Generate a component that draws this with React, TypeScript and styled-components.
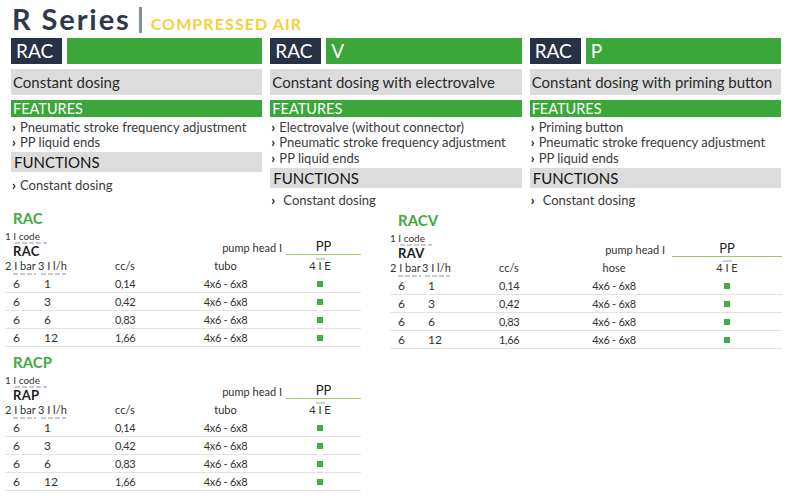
import styled, { createGlobalStyle } from "styled-components";

const GlobalStyle = createGlobalStyle`
  * { box-sizing: border-box; }
  body {
    margin: 0;
    background: #fff;
    font-family: Lato, "Open Sans", sans-serif;
    color: #333;
  }
`;

const NAVY = "#293244";
const GREEN = "#3ba63a";
const GRAY = "#dcdcdc";

const Page = styled.div`
  width: 791px;
  height: 500px;
  overflow: hidden;
  padding: 0 10px 0 11px;
`;

const Header = styled.header`
  display: flex;
  align-items: baseline;
  height: 38px;
  padding: 2px 0 0 1px;
`;

const Title = styled.h1`
  margin: 0;
  font-size: 29px;
  line-height: 34px;
  font-weight: 700;
  letter-spacing: 1.9px;
  color: #2c3a4b;
`;

const Divider = styled.span`
  align-self: flex-start;
  width: 3px;
  height: 26px;
  margin: 5px 9px 0 8px;
  background: #8090a0;
`;

const Subtitle = styled.span`
  font-size: 16px;
  font-weight: 700;
  color: #f4d03f;
  letter-spacing: 1.1px;
`;

const Columns = styled.section`
  display: grid;
  grid-template-columns: repeat(3, 1fr);
  column-gap: 8px;
`;

const Column = styled.div`
  display: flex;
  flex-direction: column;
`;

const ModelBar = styled.div`
  display: flex;
  gap: 5px;
  height: 26px;
`;

const ModelCode = styled.div`
  width: 51px;
  background: ${NAVY};
  color: #fff;
  font-size: 19px;
  line-height: 26px;
  padding-left: 5px;
`;

const ModelSuffix = styled(ModelCode)`
  flex: 1;
  width: auto;
  background: ${GREEN};
`;

const Description = styled.div`
  margin-top: 5px;
  height: 26px;
  line-height: 26px;
  background: ${GRAY};
  font-size: 15px;
  color: #2a2a2a;
  padding-left: 2px;
  white-space: nowrap;
`;

const SectionBar = styled.div<{ $tone: "green" | "gray" }>`
  margin-top: ${(p) => (p.$tone === "green" ? 5 : 2)}px;
  height: ${(p) => (p.$tone === "green" ? 17 : 20)}px;
  line-height: ${(p) => (p.$tone === "green" ? 17 : 20)}px;
  background: ${(p) => (p.$tone === "green" ? GREEN : GRAY)};
  color: ${(p) => (p.$tone === "green" ? "#fff" : "#151515")};
  font-size: ${(p) => (p.$tone === "green" ? 14.5 : 15)}px;
  padding-left: ${(p) => (p.$tone === "green" ? 2 : 3)}px;
  text-transform: uppercase;
`;

const List = styled.ul<{ $gap?: number }>`
  list-style: none;
  margin: ${(p) => p.$gap ?? 2}px 0 0;
  padding: 0;
`;

const Item = styled.li`
  display: flex;
  align-items: center;
  height: 15.5px;
  font-size: 13px;
  color: #3a3a3a;
  white-space: nowrap;
`;

const Chevron = styled.span<{ $indent?: number }>`
  width: ${(p) => p.$indent ?? 9}px;
  padding-left: 1px;
  font-weight: 900;
  font-size: 13px;
  color: #1e1e1e;
`;

const Tables = styled.section`
  display: grid;
  grid-template-columns: 356px 392px;
  column-gap: 29px;
  margin: 1px 0 0 -6px;
`;

const TableStack = styled.div<{ $offset?: number }>`
  display: flex;
  flex-direction: column;
  gap: 6px;
  margin-top: ${(p) => p.$offset ?? 0}px;
`;

const TableTitle = styled.h2`
  margin: 0;
  padding-left: 8px;
  font-size: 15px;
  line-height: 18px;
  font-weight: 700;
  color: #43a843;
`;

const Grid = styled.div<{ $cols: string }>`
  display: grid;
  grid-template-columns: ${(p) => p.$cols};
  font-size: 11px;
  letter-spacing: -0.3px;
  color: #333;
`;

const CodeBlock = styled.div`
  grid-column: 1 / 4;
  padding-top: 3px;
`;

const SmallLabel = styled.div`
  font-size: 10px;
  line-height: 12px;
  letter-spacing: 0;
  color: #333;
`;

const Dashes = styled.div<{ $left: number; $width: number }>`
  margin-left: ${(p) => p.$left}px;
  width: ${(p) => p.$width}px;
  height: 2px;
  background: repeating-linear-gradient(90deg, #c9c9c9 0 5px, transparent 5px 7px);
`;

const CodeName = styled.div`
  margin-top: 1px;
  padding-left: 8px;
  font-size: 13px;
  line-height: 13px;
  font-weight: 700;
  letter-spacing: 0.3px;
  color: #1d1d1d;
`;

const PumpLabel = styled.div<{ $shift: number }>`
  grid-column: 4;
  align-self: end;
  justify-self: end;
  margin: 0 ${(p) => p.$shift}px 3px 0;
  font-size: 11px;
  line-height: 14px;
  letter-spacing: 0;
  white-space: nowrap;
`;

const PumpValue = styled.div<{ $inset: number }>`
  grid-column: 5;
  align-self: end;
  margin: 0 0 3px ${(p) => p.$inset}px;
  border-bottom: 1px solid #9cc76a;
  font-size: 13px;
  line-height: 15px;
  letter-spacing: 0;
  text-align: center;
  color: #222;
`;

const HeadCell = styled.div<{ $center?: boolean }>`
  padding-top: 2px;
  font-size: 11px;
  line-height: 12px;
  letter-spacing: 0;
  text-align: ${(p) => (p.$center ? "center" : "left")};
  white-space: nowrap;
  ${Dashes} { margin-top: 1px; }
`;

const TopDash = styled.div`
  width: 9px;
  height: 2px;
  margin: -2px auto 0;
  background: #cfcfcf;
`;

const Cell = styled.div<{ $pad?: number; $center?: boolean }>`
  height: 18px;
  line-height: 17px;
  border-bottom: 1px solid #e3e3e3;
  padding-left: ${(p) => p.$pad ?? 0}px;
  text-align: ${(p) => (p.$center ? "center" : "left")};
`;

const BigCell = styled(Cell)`
  font-size: 12px;
  letter-spacing: 0;
`;

const Dot = styled.span`
  display: inline-block;
  width: 6px;
  height: 6px;
  background: #3fae49;
  vertical-align: 1px;
`;

type Model = {
  suffix: string;
  description: string;
  features: string[];
};

const models: Model[] = [
  {
    suffix: "",
    description: "Constant dosing",
    features: ["Pneumatic stroke frequency adjustment", "PP liquid ends"],
  },
  {
    suffix: "V",
    description: "Constant dosing with electrovalve",
    features: [
      "Electrovalve (without connector)",
      "Pneumatic stroke frequency adjustment",
      "PP liquid ends",
    ],
  },
  {
    suffix: "P",
    description: "Constant dosing with priming button",
    features: ["Priming button", "Pneumatic stroke frequency adjustment", "PP liquid ends"],
  },
];

const rows = [
  ["6", "1", "0,14"],
  ["6", "3", "0,42"],
  ["6", "6", "0,83"],
  ["6", "12", "1,66"],
];

type TableProps = {
  title: string;
  code: string;
  hose: string;
  cols: string;
  labelShift: number;
  valueInset: number;
};

function Row({ r }: { r: string[] }) {
  return (
    <>
      <BigCell $pad={8}>{r[0]}</BigCell>
      <BigCell $pad={6}>{r[1]}</BigCell>
      <Cell>{r[2]}</Cell>
      <Cell $center>4x6 - 6x8</Cell>
      <Cell $center>
        <Dot />
      </Cell>
    </>
  );
}

function DataTable({ title, code, hose, cols, labelShift, valueInset }: TableProps) {
  return (
    <div>
      <TableTitle>{title}</TableTitle>
      <Grid $cols={cols}>
        <CodeBlock>
          <SmallLabel>1 I code</SmallLabel>
          <Dashes $left={10} $width={32} />
          <CodeName>{code}</CodeName>
        </CodeBlock>
        <PumpLabel $shift={labelShift}>pump head I</PumpLabel>
        <PumpValue $inset={valueInset}>PP</PumpValue>

        <HeadCell>
          2 I bar
          <Dashes $left={8} $width={23} />
        </HeadCell>
        <HeadCell>
          3 I l/h
          <Dashes $left={3} $width={25} />
        </HeadCell>
        <HeadCell>cc/s</HeadCell>
        <HeadCell $center>{hose}</HeadCell>
        <HeadCell $center>
          <TopDash />
          4 I E
        </HeadCell>

        {rows.map((r, i) => (
          <Row key={i} r={r} />
        ))}
      </Grid>
    </div>
  );
}

export default function App() {
  return (
    <Page>
      <GlobalStyle />
      <Header>
        <Title>R Series</Title>
        <Divider />
        <Subtitle>COMPRESSED AIR</Subtitle>
      </Header>

      <Columns>
        {models.map((m, i) => (
          <Column key={i}>
            <ModelBar>
              <ModelCode>RAC</ModelCode>
              <ModelSuffix>{m.suffix}</ModelSuffix>
            </ModelBar>
            <Description>{m.description}</Description>
            <SectionBar $tone="green">Features</SectionBar>
            <List>
              {m.features.map((f) => (
                <Item key={f}>
                  <Chevron>›</Chevron>
                  {f}
                </Item>
              ))}
            </List>
            <SectionBar $tone="gray">Functions</SectionBar>
            <List $gap={5}>
              <Item>
                <Chevron $indent={i === 0 ? 9 : 13}>›</Chevron>
                Constant dosing
              </Item>
            </List>
          </Column>
        ))}
      </Columns>

      <Tables>
        <TableStack>
          <DataTable
            title="RAC"
            code="RAC"
            hose="tubo"
            cols="33px 77px 57px 107px 82px"
            labelShift={-3}
            valueInset={7}
          />
          <DataTable
            title="RACP"
            code="RAP"
            hose="tubo"
            cols="33px 77px 57px 107px 82px"
            labelShift={-3}
            valueInset={7}
          />
        </TableStack>
        <TableStack $offset={2}>
          <DataTable
            title="RACV"
            code="RAV"
            hose="hose"
            cols="32px 77px 57px 116px 110px"
            labelShift={7}
            valueInset={0}
          />
        </TableStack>
      </Tables>
    </Page>
  );
}
